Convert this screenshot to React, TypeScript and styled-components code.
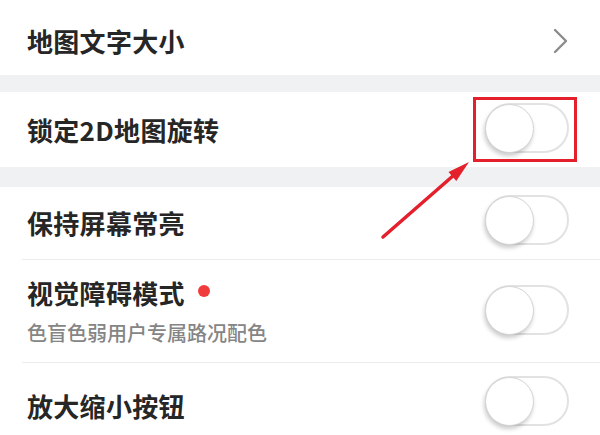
import styled, { createGlobalStyle } from 'styled-components';

const GlobalStyle = createGlobalStyle`
  html, body {
    margin: 0;
    padding: 0;
    background: #ffffff;
  }
  body {
    font-family: "Noto Sans CJK SC", "Noto Sans", sans-serif;
  }
`;

const Page = styled.div`
  position: relative;
  width: 600px;
  height: 435px;
  overflow: hidden;
  background: #ffffff;
  display: flex;
  flex-direction: column;
`;

const Band = styled.div<{ $h: number }>`
  flex: none;
  height: ${(p) => p.$h}px;
  background: #f0f1f3;
`;

const Row = styled.div<{ $h: number; $pt?: number }>`
  flex: none;
  box-sizing: border-box;
  height: ${(p) => p.$h}px;
  padding: ${(p) => p.$pt ?? 0}px 31px 0 27px;
  display: flex;
  align-items: center;
  justify-content: space-between;
  background: #ffffff;
`;

const Divider = styled.div`
  flex: none;
  height: 1px;
  margin-left: 22px;
  background: #ececec;
`;

const TextCol = styled.div`
  display: flex;
  flex-direction: column;
  gap: 14px;
`;

const Title = styled.div`
  display: flex;
  align-items: center;
  font-size: 26px;
  line-height: 30px;
  font-weight: 600;
  color: #262626;
  letter-spacing: 0.3px;
`;

const Sub = styled.div`
  font-size: 20px;
  line-height: 22px;
  font-weight: 500;
  color: #858585;
`;

const Dot = styled.span`
  width: 12px;
  height: 12px;
  border-radius: 50%;
  background: #f03c3c;
  margin-left: 13px;
  margin-top: -4px;
`;

const Track = styled.div<{ $dy?: number }>`
  position: relative;
  box-sizing: border-box;
  width: 84px;
  height: 50px;
  border-radius: 25px;
  border: 2px solid #e2e2e2;
  background: #ffffff;
  transform: translateY(${(p) => p.$dy ?? 0}px);
`;

const Knob = styled.div`
  position: absolute;
  left: -2px;
  top: -1px;
  box-sizing: border-box;
  width: 49px;
  height: 49px;
  border-radius: 50%;
  background: #ffffff;
  border: 1.5px solid #d4d4d4;
  box-shadow: -1px 3px 4px rgba(0, 0, 0, 0.2);
`;

const Chevron = () => (
  <svg width="16" height="26" viewBox="0 0 16 26">
    <path d="M2 2 L13 13 L2 24" fill="none" stroke="#8c8c8c" strokeWidth="2.4" strokeLinecap="round" strokeLinejoin="round" />
  </svg>
);

const Switch = ({ dy }: { dy?: number }) => (
  <Track $dy={dy}>
    <Knob />
  </Track>
);

const HighlightBox = styled.div`
  position: absolute;
  left: 473px;
  top: 97px;
  width: 104px;
  height: 65px;
  box-sizing: border-box;
  border: 3px solid #e3202c;
`;

const ArrowLayer = styled.svg`
  position: absolute;
  left: 0;
  top: 0;
  pointer-events: none;
`;

export default function App() {
  return (
    <>
      <GlobalStyle />
      <Page>
        <Row $h={75} $pt={7}>
          <Title>地图文字大小</Title>
          <Chevron />
        </Row>
        <Band $h={17} />
        <Row $h={75}>
          <Title>锁定2D地图旋转</Title>
          <Switch dy={-2} />
        </Row>
        <Band $h={20} />
        <Row $h={72}>
          <Title>保持屏幕常亮</Title>
          <Switch dy={-3} />
        </Row>
        <Divider />
        <Row $h={102}>
          <TextCol>
            <Title>
              视觉障碍模式
              <Dot />
            </Title>
            <Sub>色盲色弱用户专属路况配色</Sub>
          </TextCol>
          <Switch dy={-1} />
        </Row>
        <Divider />
        <Row $h={86}>
          <Title>放大缩小按钮</Title>
          <Switch dy={-5} />
        </Row>
        <HighlightBox />
        <ArrowLayer width="600" height="435" viewBox="0 0 600 435">
          <line x1="383" y1="237" x2="454" y2="175" stroke="#e3202c" strokeWidth="3.5" strokeLinecap="round" />
          <polygon points="469,162 456.3,181 448.5,172" fill="#e3202c" />
        </ArrowLayer>
      </Page>
    </>
  );
}
